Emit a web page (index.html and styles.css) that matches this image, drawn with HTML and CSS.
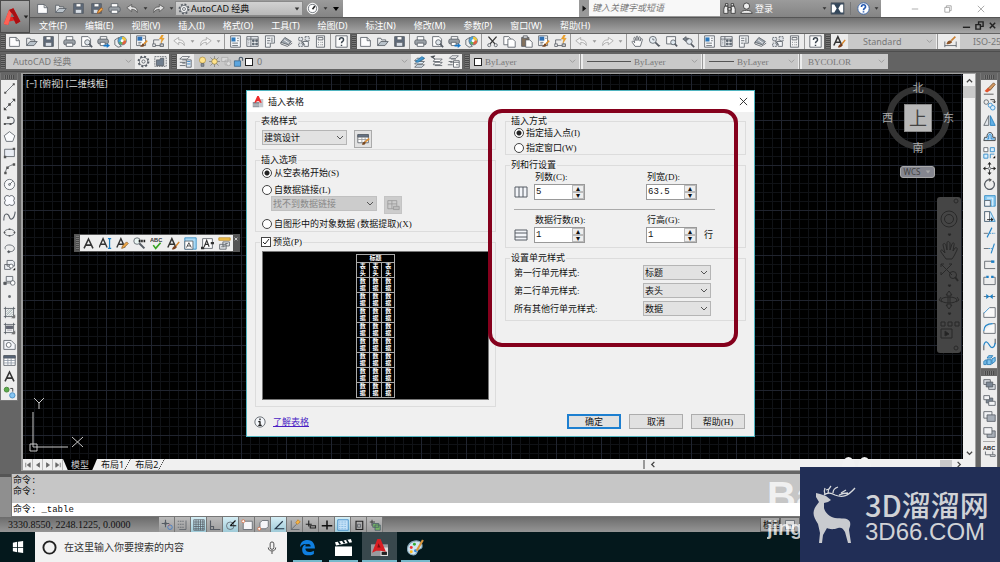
FILE: index.html
```
<!DOCTYPE html>
<html lang="zh-CN">
<head>
<meta charset="utf-8">
<title>AutoCAD 经典</title>
<link rel="stylesheet" href="styles.css">
</head>
<body>
<svg class="defs" aria-hidden="true">
<defs>
<symbol id="new" viewBox="0 0 16 16"><path d="M2 3h8l4 4v7H2z" fill="#fcfcfd"/><path d="M10 3v4h4"/></symbol>
<symbol id="open" viewBox="0 0 16 16"><path d="M2 13V4h4l1 2h5v3" fill="#e8eaec"/><path d="M2 13l4-5h9l-4 5z" fill="#b9c2ca"/></symbol>
<symbol id="save" viewBox="0 0 16 16"><path d="M2 2h12v12H2z" fill="#5f6b7c"/><path d="M5 2h6v4H5z" fill="#fff"/><path d="M4 9h8v5H4z" fill="#d8dee6"/></symbol>
<symbol id="saveas" viewBox="0 0 16 16"><path d="M2 2h12v12H2z" fill="#5f6b7c"/><path d="M5 2h6v4H5z" fill="#fff"/><path d="M4 9h6v5H4z" fill="#d8dee6"/><path d="M9 14l1-3 4-4 2 2-4 4z" fill="#f0a84a" stroke="#a05a20"/></symbol>
<symbol id="print" viewBox="0 0 16 16"><path d="M4 7V2h8v5" fill="#fff"/><rect x="1" y="6" width="14" height="6" rx="2" fill="#9aa0a6"/><path d="M4 10h8v4H4z" fill="#fff"/></symbol>
<symbol id="preview" viewBox="0 0 16 16"><path d="M2 2h8l3 3v9H2z" fill="#fff"/><circle cx="9" cy="9" r="3.2" fill="#dfe5ea"/><path d="M11 11l4 4" stroke-width="2"/></symbol>
<symbol id="publish" viewBox="0 0 16 16"><path d="M4 6V2h8v4" fill="#fff"/><rect x="1" y="5" width="13" height="6" rx="2" fill="#9aa0a6"/><path d="M4 9h6v4H4z" fill="#fff"/><path d="M8 12h4v-2l4 3-4 3v-2H8z" fill="#1777c8" stroke="none"/></symbol>
<symbol id="dwf" viewBox="0 0 16 16"><path d="M1 6l5-3v8l3 3-4 1-4-3z" fill="#eceff1"/><circle cx="10" cy="7" r="5.2" fill="#48a5de" stroke="#5f7180"/><path d="M10 7V2a5 5 0 0 1 5 5z" fill="#f0c63c" stroke="none"/><path d="M10 7h5a5 5 0 0 1-5 5z" fill="#e2603d" stroke="none"/><path d="M10 7v5a5 5 0 0 1-4-3z" fill="#60b357" stroke="none"/><circle cx="10" cy="7" r="1.8" fill="#fff" stroke="none"/></symbol>
<symbol id="match" viewBox="0 0 16 16"><path d="M2 1h11v12H2z" fill="#fff"/><path d="M3 2h6v5H3z" fill="#2c6fb5" stroke="none"/><path d="M4 9h4M4 11h3M10 4h2"/><path d="M6 14c2 0 2-3 4-4l2 2c-1 3-4 3-6 2z" fill="#7b4a24" stroke="none"/><path d="M11 11l4-4" stroke="#e0912d" stroke-width="2"/></symbol>
<symbol id="block" viewBox="0 0 16 16"><path d="M2 6h7M2 6v7h10v-3" /><rect x="1" y="11" width="3" height="3" fill="#fff"/><rect x="10" y="11" width="4" height="3" fill="#ccc"/><path d="M12 0l-3 5h3l-1 5 4-6h-3l2-4z" fill="#f5a623" stroke="#d08416" stroke-width=".5"/></symbol>
<symbol id="undo" viewBox="0 0 16 16"><path d="M1 7l6-4v3c5 0 7 2 7 7-2-3-4-4-7-4v3z"/></symbol>
<symbol id="redo" viewBox="0 0 16 16"><path d="M15 7L9 3v3c-5 0-7 2-7 7 2-3 4-4 7-4v3z"/></symbol>
<symbol id="tri" viewBox="0 0 8 8"><path d="M1 2h6L4 6z" fill="currentColor" stroke="none"/></symbol>
<symbol id="props" viewBox="0 0 16 16"><path d="M2 1h12v14H2z" fill="#f7f9fb"/><path d="M3 3h5v5H3z" fill="#2c79bd" stroke="none"/><path d="M4 10h7M4 13h7M10 4h2M10 7h2"/></symbol>
<symbol id="dcenter" viewBox="0 0 16 16"><path d="M1 2h14v12H1z" fill="#eef1f4"/><path d="M6 2v12M1 5h14M3 7h1M3 9h1M3 11h1" /><path d="M8 6h2v2H8zM12 6h2v2h-2zM8 10h2v2H8zM12 10h2v2h-2z" fill="#5d7287"/></symbol>
<symbol id="palette" viewBox="0 0 16 16"><path d="M3 1h11v9H9v5H3z" fill="#f2f4f6"/><path d="M5 4h4M5 7h4M5 10h3M11 3v6"/></symbol>
<symbol id="sheet" viewBox="0 0 16 16"><path d="M1 9l5-6 8 5-4 4z" fill="#9ea6ae"/><path d="M1 11l8 3 6-4M1 9v2"/><path d="M5 6l6 4" stroke="#fff"/></symbol>
<symbol id="markup" viewBox="0 0 16 16"><path d="M2 3h5v4H2zM10 2h5v5h-5zM2 10h5v4H2z" fill="#dfe3e8" stroke-dasharray="2 1"/><path d="M7 8h7v6H9z" fill="#f4f6f8"/><path d="M4 7l6 5"/></symbol>
<symbol id="calc" viewBox="0 0 16 16"><path d="M3 1h10v14H3z" fill="#f4f4f4"/><path d="M5 3h6v3H5zM5 9h1M8 9h1M10 9h1M5 12h1M8 12h1M10 12h1"/></symbol>
<symbol id="help" viewBox="0 0 16 16"><path d="M1 1h14v14H1z" fill="#fbfbfb"/><path d="M5.500 6c0-3.500 5-3.500 5 0 0 2-2.500 1.500-2.500 4M8 12v1.500" stroke="#3c4650" stroke-width="1.800"/></symbol>
<symbol id="cut" viewBox="0 0 16 16"><path d="M3 2l8 9M13 2L5 11" stroke="#333" stroke-width="1.600"/><circle cx="4" cy="12.500" r="1.900"/><circle cx="12" cy="12.500" r="1.900"/></symbol>
<symbol id="copy" viewBox="0 0 16 16"><path d="M1 2h6l2 2v8H1z" fill="#fff"/><path d="M6 5h6l3 3v7H6z" fill="#fff"/></symbol>
<symbol id="paste" viewBox="0 0 16 16"><path d="M2 3h9v11H2z" fill="#83715d"/><path d="M4 1h5v3H4z" fill="#ddd"/><path d="M7 6h5l3 3v6H7z" fill="#fff"/></symbol>
<symbol id="pan" viewBox="0 0 16 16"><path d="M5 14L1.500 9c-.6-1.500 1-2 1.800-.8L4.500 9.500 3.500 4c0-1.500 1.600-1.600 1.900 0L6.200 7 6.500 2.300c.1-1.300 1.800-1.300 1.900 0l.2 4.500L9.700 2.900c.4-1.200 1.900-.9 1.800.4L11 7.500l1.400-2.600c.7-1 2-.3 1.600 1L12.500 11 11.500 14z" fill="#fafafa"/></symbol>
<symbol id="zoom" viewBox="0 0 16 16"><circle cx="6" cy="6" r="4.300" fill="#e6edf2"/><path d="M9 9l5 5" stroke-width="2"/><path d="M6 4v2h2M12 13h3"/></symbol>
<symbol id="zoomwin" viewBox="0 0 16 16"><path d="M2 2h11v9H2z" fill="#f7f7f7"/><circle cx="10" cy="9" r="3" fill="#dde7ef"/><path d="M12 11l3 3" stroke-width="2"/></symbol>
<symbol id="zoomprev" viewBox="0 0 16 16"><path d="M1 5l4-3v2h3v2H5v2z" fill="#7b848e"/><circle cx="9" cy="8" r="3.500" fill="#e3eaf0"/><path d="M11 11l4 4" stroke-width="2"/></symbol>
<symbol id="gear" viewBox="0 0 16 16"><circle cx="8" cy="8" r="6" stroke-width="2.500" stroke-dasharray="2.400 2.300" /><circle cx="8" cy="8" r="5" fill="#f1f1f1"/><circle cx="8" cy="8" r="2"/></symbol>
<symbol id="wsave" viewBox="0 0 16 16"><path d="M1 2h14v12H1z" stroke-dasharray="2 1"/><path d="M3 6h4l1-2h4v9H3z" fill="#6f7d8d"/></symbol>
<symbol id="layers" viewBox="0 0 16 16"><path d="M4 2h9l-3 3H1zM4 6h5M1 9h7M4 10h4M1 13h7" fill="#fff"/><path d="M9 6h6v9H9z" fill="#dfe8f1"/><path d="M10 8h4M10 11h4" stroke="#2c79bd"/></symbol>
<symbol id="layblue" viewBox="0 0 16 16"><path d="M5 4h9l-3 3H2zM5 8h9l-3 3H2zM5 12h9l-3 3H2z" fill="#e2eef8"/><path d="M3 8l8-6 3 2-8 5z" fill="#439ad3" stroke="#2674a8"/></symbol>
<symbol id="layprev" viewBox="0 0 16 16"><path d="M6 5h9l-3 3H4zM6 9h9l-3 3H4zM6 13h9" fill="#fff"/><path d="M1 2l5-1-2 2 2 2z" fill="#222"/></symbol>
<symbol id="laystate" viewBox="0 0 16 16"><path d="M6 1h8l-3 3H3zM5 5h6M2 8h5M4 9h3M1 12h6" fill="#fff"/><path d="M8 7h7v8H8z" fill="#fff"/><path d="M8 9h7M11 12h3"/></symbol>
<symbol id="bulb" viewBox="0 0 16 16"><circle cx="8" cy="6" r="4.500" fill="#ffe38b" stroke="#a98b3d"/><path d="M6 11h4v4H6z" fill="#8d949b"/></symbol>
<symbol id="sun" viewBox="0 0 16 16"><path d="M8 0v16M0 8h16M2 2l12 12M14 2L2 14" stroke="#777"/><circle cx="8" cy="8" r="4" fill="#ffe38b" stroke="#8b7a45"/></symbol>
<symbol id="vpfreeze" viewBox="0 0 16 16"><path d="M1 2h9v6H1zM6 6h8v7H6z" stroke="#a5a5a5" fill="#d8d8d8"/><circle cx="11" cy="11" r="3" stroke="#a5a5a5" fill="#ddd"/></symbol>
<symbol id="lock" viewBox="0 0 16 16"><path d="M9 7V4c0-3 5-3 5 0v3" stroke="#456" stroke-width="1.500"/><path d="M2 7h9v8H2z" fill="#5ca6df" stroke="#2d5a80"/></symbol>
<symbol id="astyle" viewBox="0 0 16 16"><path d="M1 13L6 2l5 11M3 9h6" stroke="#333" stroke-width="1.800"/><path d="M6 15c1-2 2-4 4-4l2 1c-1 3-4 4-6 3z" fill="#7b3f1c" stroke="none"/><path d="M11 11l4-5" stroke="#d8862d" stroke-width="1.800"/></symbol>
<symbol id="dim" viewBox="0 0 16 16"><path d="M1 8v7M15 8v7M1 13h14"/><path d="M3 11c1-4 4-5 6-4l1 2c-2 2-5 3-7 2z" fill="#8b5429" stroke="none"/><path d="M9 7l5-5" stroke="#c98034" stroke-width="2"/></symbol>
<symbol id="line" viewBox="0 0 16 16"><path d="M3 13L13 3"/><path d="M1.500 12h2.500v2.500H1.500zM12 1.500h2.500V4H12z" fill="#555" stroke="none"/></symbol>
<symbol id="xline" viewBox="0 0 16 16"><path d="M2 14L14 2"/><path d="M1 15v-4l4 4zM15 1v4l-4-4zM6.500 6.500h3v3h-3z" fill="#444" stroke="none"/></symbol>
<symbol id="pline" viewBox="0 0 16 16"><path d="M2 12h8c5 0 5-8 0-8H7" stroke-width="1.300"/><path d="M1 11h2.500v2.500H1zM8 11h2.500v2.500H8zM5 3h3v3H5z" fill="#555" stroke="none"/></symbol>
<symbol id="poly" viewBox="0 0 16 16"><path d="M8 2l6.500 5L12 14H4L1.500 7z" fill="#fbfcfe"/></symbol>
<symbol id="rect" viewBox="0 0 16 16"><path d="M2 4h12v9H2z" fill="#e9edf4"/><path d="M1 12h3v3H1zM12 2h3v3h-3z" fill="#555" stroke="none"/></symbol>
<symbol id="arc" viewBox="0 0 16 16"><path d="M3 14C3 8 7 4 14 3"/><path d="M1.500 12h3v3h-3zM4 5.500h3v3H4zM12 1.500h3v3h-3z" fill="#555" stroke="none"/></symbol>
<symbol id="circle" viewBox="0 0 16 16"><circle cx="8" cy="8" r="6.300" fill="#f7f8fa"/><path d="M8 8l4-4"/><circle cx="8" cy="8" r="1.200"/></symbol>
<symbol id="cloud" viewBox="0 0 16 16"><path d="M8 3c3-3 8 1 5 5 3 4-1 8-5 5-4 3-8-1-5-5-3-4 1-8 5-5z" fill="#fafbff" stroke-width="1.200"/></symbol>
<symbol id="spline" viewBox="0 0 16 16"><path d="M1 13C1 1 7 5 8 9s6 3 7-7" stroke-width="1.300"/></symbol>
<symbol id="ellipse" viewBox="0 0 16 16"><ellipse cx="8" cy="8" rx="6.500" ry="4"/><path d="M7 3h2v2H7zM7 11h2v2H7zM1 7h2v2H1zM13 7h2v2h-2z" fill="#555" stroke="none"/></symbol>
<symbol id="earc" viewBox="0 0 16 16"><path d="M3 9C0 2 14 2 14 8c0 3-3 4-6 4"/><circle cx="7" cy="12" r="1.200" fill="#555"/></symbol>
<symbol id="insblk" viewBox="0 0 16 16"><path d="M5 3h7l2 2v5H5zM2 8h7v6H2z" fill="#eef0f4"/><circle cx="10" cy="10" r="2.500" fill="#fff"/><path d="M15 12v3h-3z" fill="#111" stroke="none"/></symbol>
<symbol id="mkblk" viewBox="0 0 16 16"><path d="M4 3h8v6H4zM1 11h9" fill="#eef0f4"/><circle cx="12" cy="11" r="2.800" fill="#fff"/><path d="M1 10h3v3H1z" fill="#555"/></symbol>
<symbol id="point" viewBox="0 0 16 16"><path d="M7 7h2v2H7z" fill="#777"/></symbol>
<symbol id="hatch" viewBox="0 0 16 16"><path d="M3 1v14M13 1v14M1 3h14M1 13h14"/><path d="M4 7l3-3M4 10l6-6M4 12l8-8M7 12l5-5M10 12l2-2" stroke="#9aa"/><path d="M10 15l5-5v5z" fill="#777" stroke="none"/></symbol>
<symbol id="grad" viewBox="0 0 16 16"><path d="M3 1v14M13 1v14M1 3h14M1 13h14"/><path d="M4 5h8v3H4z" fill="#667"/><path d="M5 10h6" stroke="#99a"/><path d="M10 15l5-5v5z" fill="#777" stroke="none"/></symbol>
<symbol id="region" viewBox="0 0 16 16"><path d="M1 3h9l5 5v6H1z" fill="#f4f6fa"/><circle cx="7" cy="8.500" r="3" fill="#fff"/></symbol>
<symbol id="table" viewBox="0 0 16 16"><path d="M1 2h14v12H1z" fill="#fff"/><path d="M1 2h14v3H1z" fill="#59677a"/><path d="M1 8h14M1 11h14M6 5v9M10 5v9" stroke="#8b95a2"/></symbol>
<symbol id="mtext" viewBox="0 0 16 16"><path d="M2.500 14L8 2.500 13.500 14M4.500 10h7" stroke="#333" stroke-width="1.900"/></symbol>
<symbol id="addsel" viewBox="0 0 16 16"><circle cx="4.500" cy="4.500" r="3" fill="#5cab4a" stroke="#3c7d2f"/><circle cx="11.500" cy="11.500" r="3.300" fill="#85c4f2" stroke="#3b86bd"/><path d="M9 3h3v4" stroke="#222"/></symbol>
<symbol id="erase" viewBox="0 0 16 16"><path d="M6 8l7-7 2 2-6 7z" fill="#d59a62" stroke="#75512f"/><path d="M2 11l4-4 3 3-4 3z" fill="#e0552f" stroke="none"/><path d="M1 15h12" stroke="#444"/></symbol>
<symbol id="copyobj" viewBox="0 0 16 16"><circle cx="4" cy="5" r="2.800"/><circle cx="9" cy="9" r="2.600" stroke="#2f8bd0"/><circle cx="12" cy="12" r="2.800" stroke="#2f8bd0" fill="#d9edfb"/><path d="M9 2h5v4M12 4l2 2 2-2" stroke="#222"/></symbol>
<symbol id="mirror" viewBox="0 0 16 16"><path d="M7 2v12H1z" fill="#e3e6ea"/><path d="M9 2v12h6z" fill="#62b1e6" stroke="#1f7dbd"/></symbol>
<symbol id="offset" viewBox="0 0 16 16"><path d="M1 13h14V9h-3C13 1 4 1 5 9H2z" fill="#b9defa" stroke="#333"/><path d="M5 11h2V7c0-2 3-2 3 0v4h4" stroke="#1d7fc4"/></symbol>
<symbol id="array" viewBox="0 0 16 16"><path d="M1 2h5v5H1z" fill="#fff"/><path d="M9 2h5v5H9zM1 10h5v5H1z" stroke="#2585c7" fill="#d9edfb"/><path d="M9 15v-5h5" stroke="#2585c7"/><path d="M15 12v3h-3z" fill="#111" stroke="none"/></symbol>
<symbol id="move" viewBox="0 0 16 16"><path d="M8 1v5M8 10v5M1 8h5M10 8h5" stroke="#222"/><path d="M8 0l2.500 3h-5zM8 16l2.500-3h-5zM0 8l3-2.500v5zM16 8l-3-2.500v5z" fill="#222" stroke="none"/><circle cx="8" cy="8" r="1.500"/></symbol>
<symbol id="rotate" viewBox="0 0 16 16"><path d="M8 2a6 6 0 1 0 4 1.500" stroke-width="1.500"/><path d="M7 0l4 2-3 3z" fill="#555" stroke="none"/></symbol>
<symbol id="scale" viewBox="0 0 16 16"><path d="M2 2h13v13H2z" fill="#8ccbf2" stroke="#2a86c2"/><path d="M5 5h7v10" stroke="#fff"/><path d="M2 8h7v7H2z" fill="#eef4fa"/></symbol>
<symbol id="stretch" viewBox="0 0 16 16"><path d="M2 2h7l6 12H2z" fill="#cbe8fb" stroke="#2a86c2"/><path d="M2 2h6v12H2z" fill="#f6f6f6"/><path d="M5 11h5v-2l3 3-3 2v-2H5z" fill="#222" stroke="none"/></symbol>
<symbol id="trim" viewBox="0 0 16 16"><path d="M1 9h5" /><path d="M8 9h7" stroke="#2585c7" stroke-dasharray="2 1"/><path d="M5 14L11 2" stroke="#2585c7" stroke-width="1.400"/></symbol>
<symbol id="extend" viewBox="0 0 16 16"><path d="M1 8h6"/><path d="M7 8h4" stroke="#2585c7" stroke-dasharray="2 1"/><path d="M10 14l4-12" stroke="#2585c7" stroke-width="1.400"/></symbol>
<symbol id="breakpt" viewBox="0 0 16 16"><path d="M12 4H2v9h13" /><path d="M10 3h4v3h-4z" fill="#1d7fc4" stroke="none"/></symbol>
<symbol id="break" viewBox="0 0 16 16"><path d="M4 4H1v9h14V4h-3"/><path d="M4 2h3v3H4zM10 2h3v3h-3z" fill="#1d7fc4" stroke="none"/></symbol>
<symbol id="join" viewBox="0 0 16 16"><path d="M1 8h14"/><path d="M4 5l4 3-4 3zM12 5L8 8l4 3z" fill="#1d7fc4" stroke="none"/></symbol>
<symbol id="chamfer" viewBox="0 0 16 16"><path d="M1 8v6h14V2H8" fill="#f8f8f8"/><path d="M1 9l7-7" stroke="#2585c7"/></symbol>
<symbol id="fillet" viewBox="0 0 16 16"><path d="M1 11v3h14V2h-3" fill="#f8f8f8"/><path d="M1 11c0-6 4-9 11-9" stroke="#2585c7" stroke-width="1.400"/></symbol>
<symbol id="blend" viewBox="0 0 16 16"><path d="M1 15V9M15 1v6" stroke-width="1.300"/><path d="M1 9c2-7 5-4 7 0s6 4 7-3" stroke="#2585c7" stroke-width="1.500"/></symbol>
<symbol id="explode" viewBox="0 0 16 16"><path d="M5 7h5v6H5zM1 9l3-2v6H1zM5 5l2-3h5l-2 3zM11 6l4-2v5l-4 3z" fill="#7fc3ee" stroke="#2076b3"/></symbol>
<symbol id="front" viewBox="0 0 16 16"><path d="M1 2h8v6H1zM7 8h8v6H7z" fill="#d7dbe0"/><path d="M4 5h8v6H4z" fill="#7c8794"/></symbol>
<symbol id="back" viewBox="0 0 16 16"><path d="M4 5h8v6H4z" fill="#7c8794"/><path d="M1 2h7v5H1zM7 9h8v5H7z" fill="#f2f3f5"/></symbol>
<symbol id="above" viewBox="0 0 16 16"><path d="M1 2h10v8H1z" fill="#f2f3f5"/><path d="M5 6h10v8H5z" fill="#a7aeb7"/></symbol>
<symbol id="under" viewBox="0 0 16 16"><path d="M5 6h10v8H5z" fill="#a7aeb7"/><path d="M1 2h10v8H1z" fill="#f2f3f5"/></symbol>
<symbol id="abc" viewBox="0 0 16 16"><text x="0" y="6" font-size="7" font-weight="bold" font-family="Liberation Sans, sans-serif" fill="#222" stroke="none">ABC</text><path d="M3 8v4h9V8M12 12h3v2H9v-2"/></symbol>
<symbol id="textedit" viewBox="0 0 16 16"><path d="M1 13L6 2l5 11M3 9h6" stroke="#333" stroke-width="1.700"/><path d="M7 14l1-3 5-5 2 2-5 5z" fill="#f5ab46" stroke="#8c5c24"/></symbol>
<symbol id="dtext" viewBox="0 0 16 16"><path d="M0 13L5 2l5 11M2 9h6" stroke="#333" stroke-width="1.700"/><path d="M11 2h4M11 14h4M13 2v12" stroke="#1d7fc4" stroke-width="1.500"/></symbol>
<symbol id="find" viewBox="0 0 16 16"><circle cx="5" cy="5" r="4" fill="#e9f4f1"/><path d="M8 8l6 6" stroke-width="2.500"/><path d="M7 5h8" stroke="#222" stroke-width="3" stroke-dasharray="2 1"/></symbol>
<symbol id="spell" viewBox="0 0 16 16"><text x="0" y="6" font-size="7" font-weight="bold" font-family="Liberation Sans, sans-serif" fill="#333" stroke="none">ABC</text><path d="M4 10l3 4 6-7" stroke="#37a321" stroke-width="2"/></symbol>
<symbol id="scaletext" viewBox="0 0 16 16"><path d="M1 1h14v14H1z" fill="#a9d9f5" stroke="#2a86c2"/><path d="M1 5h10v10H1z" fill="#fff"/><path d="M3 13l3-6 3 6M4 11h4" stroke="#333"/></symbol>
<symbol id="justify" viewBox="0 0 16 16"><path d="M2 2h12v12H2z" fill="#fff"/><path d="M4 12l3-8 3 8M5 9h4" stroke="#333" stroke-width="1.400"/><path d="M0 12h4v3H0zM12 6h4v3h-4z" fill="#333" stroke="none"/></symbol>
<symbol id="spacecv" viewBox="0 0 16 16"><path d="M1 1h14v3H1z" fill="#f6c64f" stroke="#b88827"/><path d="M6 6h8v5H6zM2 9h8v6H2z" fill="#e4e7ea"/><path d="M4 12h4M9 8h3"/></symbol>
<symbol id="logoA" viewBox="0 0 24 24"><path d="M2 20L8 4l5-2 8 15-5 3-2-4-6 1-1 4z" fill="#e32622"/><path d="M8 4l5-2 8 15-5 3z" fill="#a90f13"/><path d="M9 12l2-5 3 5z" fill="#777" stroke="none"/><path d="M8 4L2 20l5 1 4-13z" fill="#ff6155" stroke="none"/></symbol>
<symbol id="appico" viewBox="0 0 16 16"><path d="M1 8h9v7H1z" fill="#8b9098" stroke="none"/><path d="M10 4h5v11h-5z" fill="#c3c8ce" stroke="none"/><path d="M1 11h9M1 13h9" stroke="#fff" stroke-width=".5"/><path d="M3 9L7 0h2l4 9h-2.500L9.500 7h-3L5 9z" fill="#ef2b2b" stroke="none"/></symbol>
<symbol id="tablebrush" viewBox="0 0 16 16"><path d="M1 2h13v10H1z" fill="#fff"/><path d="M1 2h13v3H1z" fill="#667587"/><path d="M1 8h13M6 5v7M10 5v7" stroke="#999"/><path d="M6 14c2-4 3-4 5-3-1 4-3 4-5 3z" fill="#78471f" stroke="none"/><path d="M10 11l5-4" stroke="#dd8f32" stroke-width="2"/></symbol>
</defs>
</svg>

<div class="app">
<header class="top">
  <button class="appbtn" aria-label="应用程序菜单"><svg class="applogo"><use href="#logoA"/></svg><svg class="t"><use href="#tri"/></svg></button>
  <div class="topmain">
    <div class="titlebar">
      <div class="quick">
        <button class="ic" aria-label="新建"><svg><use href="#new"/></svg></button>
        <button class="ic" aria-label="打开"><svg><use href="#open"/></svg></button>
        <button class="ic" aria-label="保存"><svg><use href="#save"/></svg></button>
        <button class="ic" aria-label="另存为"><svg><use href="#saveas"/></svg></button>
        <button class="ic" aria-label="打印"><svg><use href="#print"/></svg></button>
        <button class="ic pale" aria-label="放弃"><svg><use href="#undo"/></svg></button><button class="dd" aria-label="放弃列表"><svg><use href="#tri"/></svg></button>
        <button class="ic pale" aria-label="重做"><svg><use href="#redo"/></svg></button><button class="dd" aria-label="重做列表"><svg><use href="#tri"/></svg></button>
        <label class="wsbox"><svg class="i"><use href="#gear"/></svg><select aria-label="工作空间"><option>AutoCAD 经典</option></select></label>
        <button class="ic" aria-label="速度"><svg viewBox="0 0 16 16"><circle cx="8" cy="8" r="6.500" fill="#fff" stroke="#fff"/><circle cx="8" cy="8" r="5"/><path d="M8 9l3-4" stroke="#222" stroke-width="2"/></svg></button><button class="dd" aria-label="更多"><svg><use href="#tri"/></svg></button>
        <button class="dd cust" aria-label="自定义"><svg><use href="#tri"/></svg></button>
      </div>
      <div class="caption"></div>
      <button class="expand" aria-label="展开"><svg viewBox="0 0 8 8"><path d="M2 0v8l5-4z" fill="#111" stroke="none"/></svg></button>
      <input class="search" aria-label="搜索" placeholder="键入关键字或短语">
      <div class="info">
        <button class="ic" aria-label="查找"><svg viewBox="0 0 16 16"><path d="M2 5h4v9H1V9zM10 5h4l1 4v5h-5zM6 7h4v3H6zM3 2h3v3H3zM10 2h3v3h-3z" fill="#eee" stroke="#333"/></svg></button>
        <button class="ic" aria-label="用户"><svg viewBox="0 0 16 16"><circle cx="8" cy="5" r="3.800" fill="#eee" stroke="#333"/><path d="M1 14c0-5 14-5 14 0z" fill="#eee" stroke="#333"/></svg></button>
        <button class="login">登录</button>
        <button class="dd" aria-label="登录菜单"><svg><use href="#tri"/></svg></button>
        <button class="ic" aria-label="Exchange"><svg viewBox="0 0 16 16"><path d="M0 1h16v14H0z" fill="#33475b"/><path d="M1 3h3l3 5-3 5H1zM15 3h-3L9 8l3 5h3z" fill="#fff" stroke="none"/></svg></button>
        <span class="vline"></span>
        <button class="ic" aria-label="帮助"><svg viewBox="0 0 16 16"><circle cx="8" cy="8" r="7" fill="#fff" stroke="#2a5caa"/><path d="M5.500 6c0-3.500 5-3.500 5 0 0 2-2.500 1.500-2.500 4M8 11.500v1.500" stroke="#2458b0" stroke-width="2"/></svg></button>
        <button class="dd" aria-label="帮助菜单"><svg><use href="#tri"/></svg></button>
      </div>
      <div class="winctl">
        <button aria-label="最小化"><svg viewBox="0 0 10 10"><path d="M1 5h8"/></svg></button>
        <button aria-label="还原"><svg viewBox="0 0 10 10"><path d="M1 3h6v6H1zM3 3V1h6v6H7"/></svg></button>
        <button aria-label="关闭"><svg viewBox="0 0 10 10"><path d="M1 1l8 8M9 1L1 9"/></svg></button>
      </div>
    </div>
    <nav class="menubar">
      <button>文件(F)</button><button>编辑(E)</button><button>视图(V)</button><button>插入(I)</button><button>格式(O)</button><button>工具(T)</button><button>绘图(D)</button><button>标注(N)</button><button>修改(M)</button><button>参数(P)</button><button>窗口(W)</button><button>帮助(H)</button>
      <span class="docctl">
        <button aria-label="最小化文档"><svg viewBox="0 0 10 10"><path d="M1 7h8"/></svg></button>
        <button aria-label="还原文档"><svg viewBox="0 0 10 10"><path d="M1 4h5v5H1zM4 4V1h5v5H6"/></svg></button>
        <button aria-label="关闭文档"><svg viewBox="0 0 10 10"><path d="M2 2l6 6M8 2L2 8"/></svg></button>
      </span>
    </nav>
  </div>
</header>

<div class="tbrow">
  <div class="tb"><i class="grip"></i>
    <button class="ic" aria-label="新建"><svg><use href="#new"/></svg></button><button class="ic" aria-label="打开"><svg><use href="#open"/></svg></button><button class="ic" aria-label="保存"><svg><use href="#save"/></svg></button><i class="sep"></i>
    <button class="ic" aria-label="打印"><svg><use href="#print"/></svg></button><button class="ic" aria-label="打印预览"><svg><use href="#preview"/></svg></button><button class="ic" aria-label="发布"><svg><use href="#publish"/></svg></button><button class="ic" aria-label="三维 DWF"><svg><use href="#dwf"/></svg></button><i class="sep"></i>
    <button class="ic" aria-label="特性匹配"><svg><use href="#match"/></svg></button><button class="ic" aria-label="块编辑器"><svg><use href="#block"/></svg></button><i class="sep"></i>
    <button class="ic off" aria-label="放弃"><svg><use href="#undo"/></svg></button><button class="dd off" aria-label="放弃列表"><svg><use href="#tri"/></svg></button><button class="ic off" aria-label="重做"><svg><use href="#redo"/></svg></button><button class="dd off" aria-label="重做列表"><svg><use href="#tri"/></svg></button><i class="sep"></i>
    <button class="ic" aria-label="特性"><svg><use href="#props"/></svg></button><button class="ic" aria-label="设计中心"><svg><use href="#dcenter"/></svg></button><button class="ic" aria-label="工具选项板"><svg><use href="#palette"/></svg></button><button class="ic" aria-label="图纸集"><svg><use href="#sheet"/></svg></button><button class="ic" aria-label="标记集"><svg><use href="#markup"/></svg></button><button class="ic" aria-label="计算器"><svg><use href="#calc"/></svg></button><i class="sep"></i>
    <button class="ic" aria-label="帮助"><svg><use href="#help"/></svg></button>
  </div>
  <div class="tb"><i class="grip"></i>
    <button class="ic" aria-label="新建"><svg><use href="#new"/></svg></button><button class="ic" aria-label="打开"><svg><use href="#open"/></svg></button><button class="ic" aria-label="保存"><svg><use href="#save"/></svg></button><i class="sep"></i>
    <button class="ic" aria-label="打印"><svg><use href="#print"/></svg></button><button class="ic" aria-label="打印预览"><svg><use href="#preview"/></svg></button><button class="ic" aria-label="发布"><svg><use href="#publish"/></svg></button><button class="ic" aria-label="三维 DWF"><svg><use href="#dwf"/></svg></button><i class="sep"></i>
    <button class="ic" aria-label="剪切"><svg><use href="#cut"/></svg></button><button class="ic" aria-label="复制"><svg><use href="#copy"/></svg></button><button class="ic" aria-label="粘贴"><svg><use href="#paste"/></svg></button><button class="ic" aria-label="特性匹配"><svg><use href="#match"/></svg></button><button class="ic" aria-label="块编辑器"><svg><use href="#block"/></svg></button><i class="sep"></i>
    <button class="ic off" aria-label="放弃"><svg><use href="#undo"/></svg></button><button class="dd off" aria-label="放弃列表"><svg><use href="#tri"/></svg></button><button class="ic off" aria-label="重做"><svg><use href="#redo"/></svg></button><button class="dd off" aria-label="重做列表"><svg><use href="#tri"/></svg></button><i class="sep"></i>
    <button class="ic" aria-label="平移"><svg><use href="#pan"/></svg></button><button class="ic" aria-label="缩放"><svg><use href="#zoom"/></svg></button><button class="ic" aria-label="窗口缩放"><svg><use href="#zoomwin"/></svg></button><button class="ic" aria-label="缩放上一个"><svg><use href="#zoomprev"/></svg></button><i class="sep"></i>
    <button class="ic" aria-label="特性"><svg><use href="#props"/></svg></button><button class="ic" aria-label="设计中心"><svg><use href="#dcenter"/></svg></button><button class="ic" aria-label="工具选项板"><svg><use href="#palette"/></svg></button><button class="ic" aria-label="图纸集"><svg><use href="#sheet"/></svg></button><button class="ic" aria-label="标记集"><svg><use href="#markup"/></svg></button><button class="ic" aria-label="计算器"><svg><use href="#calc"/></svg></button><i class="sep"></i>
    <button class="ic" aria-label="帮助"><svg><use href="#help"/></svg></button>
  </div>
  <div class="tb rest"><i class="grip"></i>
    <button class="ic" aria-label="文字样式"><svg><use href="#astyle"/></svg></button><select class="gsel std" aria-label="文字样式"><option>Standard</option></select><i class="sep"></i>
    <button class="ic wide" aria-label="标注样式"><svg><use href="#dim"/></svg></button><select class="gsel iso" aria-label="标注样式"><option>ISO-25</option></select>
  </div>
</div>
<div class="tbrow second">
  <div class="tb"><i class="grip"></i><select class="gsel ws" aria-label="工作空间"><option>AutoCAD 经典</option></select>
    <button class="ic" aria-label="工作空间设置"><svg><use href="#gear"/></svg></button><button class="ic" aria-label="我的工作空间"><svg><use href="#wsave"/></svg></button>
  </div>
  <div class="tb"><i class="grip"></i>
    <button class="ic" aria-label="图层特性"><svg><use href="#layers"/></svg></button>
    <label class="layer"><svg><use href="#bulb"/></svg><svg><use href="#sun"/></svg><svg><use href="#vpfreeze"/></svg><svg><use href="#lock"/></svg><i class="swatch"></i><select class="gsel" aria-label="图层"><option>0</option></select></label>
    <button class="ic" aria-label="置为当前"><svg><use href="#layblue"/></svg></button><button class="ic" aria-label="上一个图层"><svg><use href="#layprev"/></svg></button><button class="ic" aria-label="图层状态"><svg><use href="#laystate"/></svg></button>
  </div>
  <div class="tb bylayer"><i class="grip"></i>
    <label class="prop color"><i class="swatch"></i><select class="gsel" aria-label="颜色"><option>ByLayer</option></select></label><i class="sep"></i>
    <label class="prop ltype"><i class="rule long"></i><select class="gsel" aria-label="线型"><option>ByLayer</option></select></label><i class="sep"></i>
    <label class="prop lw"><i class="rule"></i><select class="gsel" aria-label="线宽"><option>ByLayer</option></select></label><i class="sep"></i>
    <label class="prop pstyle"><select class="gsel" aria-label="打印样式"><option>BYCOLOR</option></select></label>
  </div>
</div>

<main class="work">
  <aside class="rail left"><div class="strip"><i class="hgrip"></i>
    <button aria-label="直线"><svg><use href="#line"/></svg></button><button aria-label="构造线"><svg><use href="#xline"/></svg></button><button aria-label="多段线"><svg><use href="#pline"/></svg></button><button aria-label="多边形"><svg><use href="#poly"/></svg></button><button aria-label="矩形"><svg><use href="#rect"/></svg></button><button aria-label="圆弧"><svg><use href="#arc"/></svg></button><button aria-label="圆"><svg><use href="#circle"/></svg></button><button aria-label="修订云线"><svg><use href="#cloud"/></svg></button><button aria-label="样条曲线"><svg><use href="#spline"/></svg></button><button aria-label="椭圆"><svg><use href="#ellipse"/></svg></button><button aria-label="椭圆弧"><svg><use href="#earc"/></svg></button><button aria-label="插入块"><svg><use href="#insblk"/></svg></button><button aria-label="创建块"><svg><use href="#mkblk"/></svg></button><button aria-label="点"><svg><use href="#point"/></svg></button><button aria-label="图案填充"><svg><use href="#hatch"/></svg></button><button aria-label="渐变色"><svg><use href="#grad"/></svg></button><button aria-label="面域"><svg><use href="#region"/></svg></button><button aria-label="表格"><svg><use href="#table"/></svg></button><button aria-label="多行文字"><svg><use href="#mtext"/></svg></button><button aria-label="添加选定对象"><svg><use href="#addsel"/></svg></button>
  </div></aside>

  <section class="doc">
    <div class="viewrow">
      <div class="canvas">
        <div class="vplabel">[−] [俯视] [二维线框]</div>
        <div class="floatbar"><i class="grip"></i><div class="set">
          <button aria-label="多行文字"><svg><use href="#mtext"/></svg></button><button aria-label="单行文字"><svg><use href="#dtext"/></svg></button><button aria-label="编辑文字"><svg><use href="#textedit"/></svg></button><button aria-label="查找"><svg><use href="#find"/></svg></button><button aria-label="拼写检查"><svg><use href="#spell"/></svg></button><button aria-label="文字样式"><svg><use href="#astyle"/></svg></button><button aria-label="缩放文字"><svg><use href="#scaletext"/></svg></button><button aria-label="对正文字"><svg><use href="#justify"/></svg></button><button aria-label="转换空间"><svg><use href="#spacecv"/></svg></button>
        </div><button class="x" aria-label="关闭工具栏"><svg viewBox="0 0 6 6"><path d="M1 1l4 4M5 1L1 5"/></svg></button></div>
        <svg class="ucs" viewBox="0 0 60 60"><path d="M8 18v35h35M5 50h7v7H5zM9 4l5 5 5-5M14 9v6M47 43l11 10M58 43L47 53"/></svg>
        <div class="cube"><svg viewBox="0 0 72 72"><circle cx="36" cy="36" r="31" fill="none" stroke="#333" stroke-width="7"/></svg>
          <span class="n">北</span><span class="s">南</span><span class="w">西</span><span class="e">东</span><span class="face">上</span></div>
        <button class="wcs">WCS <svg><use href="#tri"/></svg></button>
        <div class="navbar"><svg viewBox="0 0 24 156">
          <circle cx="19" cy="4" r="2"/><circle cx="12" cy="22" r="8"/><circle cx="12" cy="22" r="4.500"/><path d="M11 37h3l-1.500 2zM11 88h3l-1.500 2zM11 116h3l-1.500 2z" fill="#222"/>
          <path d="M9 62l-5-7c-1-2 1-3 2-1l2 2-2-8c0-2 2-2 3 0l1 5 0-7c0-2 2-2 3 0v7l2-6c1-2 3-1 2 1l-1 6 2-3c1-1 3 0 2 2l-3 6-2 3z"/>
          <path d="M4 67l11 11M15 67L4 78M4 67h3M4 67v3M15 67h-3M4 78v-3"/><circle cx="16" cy="78" r="3.500"/><path d="M18 80l3 4" stroke-width="2"/>
          <ellipse cx="12" cy="103" rx="8" ry="3"/><path d="M12 94l3 4h-2v10h2l-3 4-3-4h2V98H9zM4 100l-2 3 3 2M20 100l2 3-3 2"/>
          <path d="M4 125h4v4H4zM11 125h4v4h-4zM18 125h4v4h-4zM4 132h11v9H4z"/><path d="M8 134v5l4-2z" fill="#222"/><circle cx="19" cy="151" r="2"/></svg></div>
      </div>
      <div class="vscroll"><button aria-label="向上"><svg viewBox="0 0 8 8"><path d="M1 6l3-3 3 3"/></svg></button><i class="thumb"></i><button class="end" aria-label="向下"><svg viewBox="0 0 8 8"><path d="M1 2l3 3 3-3"/></svg></button></div>
    </div>
    <div class="tabs">
      <button class="nv" aria-label="第一个"><svg viewBox="0 0 8 8"><path d="M1 1v6M7 1v6L3 4z"/></svg></button><button class="nv" aria-label="上一个"><svg viewBox="0 0 8 8"><path d="M6 1v6L2 4z"/></svg></button><button class="nv" aria-label="下一个"><svg viewBox="0 0 8 8"><path d="M2 1v6l4-3z"/></svg></button><button class="nv" aria-label="最后一个"><svg viewBox="0 0 8 8"><path d="M7 1v6M1 1v6l4-3z"/></svg></button>
      <button class="tab active">模型</button><button class="tab">布局1</button><button class="tab">布局2</button>
      <div class="hscroll"><i class="split"></i><button aria-label="向左"><svg viewBox="0 0 8 8"><path d="M5 1L2 4l3 3"/></svg></button><i class="hthumb"></i><button aria-label="向右"><svg viewBox="0 0 8 8"><path d="M3 1l3 3-3 3"/></svg></button></div>
    </div>
  </section>

  <aside class="rail right"><div class="strip"><i class="hgrip"></i>
    <button aria-label="删除"><svg><use href="#erase"/></svg></button><button aria-label="复制"><svg><use href="#copyobj"/></svg></button><button aria-label="镜像"><svg><use href="#mirror"/></svg></button><button aria-label="偏移"><svg><use href="#offset"/></svg></button><button aria-label="阵列"><svg><use href="#array"/></svg></button><button aria-label="移动"><svg><use href="#move"/></svg></button><button aria-label="旋转"><svg><use href="#rotate"/></svg></button><button aria-label="缩放"><svg><use href="#scale"/></svg></button><button aria-label="拉伸"><svg><use href="#stretch"/></svg></button><button aria-label="修剪"><svg><use href="#trim"/></svg></button><button aria-label="延伸"><svg><use href="#extend"/></svg></button><button aria-label="打断于点"><svg><use href="#breakpt"/></svg></button><button aria-label="打断"><svg><use href="#break"/></svg></button><button aria-label="合并"><svg><use href="#join"/></svg></button><button aria-label="倒角"><svg><use href="#chamfer"/></svg></button><button aria-label="圆角"><svg><use href="#fillet"/></svg></button><button aria-label="光顺曲线"><svg><use href="#blend"/></svg></button><button aria-label="分解"><svg><use href="#explode"/></svg></button>
    </div><div class="strip grow"><i class="hgrip"></i>
    <button aria-label="前置"><svg><use href="#front"/></svg></button><button aria-label="后置"><svg><use href="#back"/></svg></button><button aria-label="置于对象之上"><svg><use href="#above"/></svg></button><button aria-label="置于对象之下"><svg><use href="#under"/></svg></button><i class="hsep"></i><button aria-label="文字前置"><svg><use href="#abc"/></svg></button>
  </div></aside>
</main>

<section class="command">
  <i class="cgrip"></i>
  <div class="ctext">
    <div class="history"><div>命令:</div><div>命令:</div></div>
    <label class="prompt"><span>命令:</span><input value="_table"></label>
  </div>
</section>

<footer class="status">
  <output class="coords">3330.8550, 2248.1225, 0.0000</output>
  <div class="modes">
    <button aria-label="推断约束"><svg viewBox="0 0 16 16"><path d="M6 1v10M1 6h10" stroke-width="1.500"/><circle cx="6" cy="6" r="1.500"/><circle cx="12" cy="11" r="3" stroke="#37c"/><path d="M10 9l2-2" stroke="#d33"/></svg></button>
    <button aria-label="捕捉"><svg viewBox="0 0 16 16"><path d="M1 3h8M1 7h8M1 11h8" stroke-dasharray="2 1"/><path d="M12 2v12M3 14h9"/></svg></button>
    <button class="on" aria-label="栅格"><svg viewBox="0 0 16 16"><path d="M1 1h14v14H1zM1 4h14M1 7h14M1 10h14M1 13h14M4 1v14M7 1v14M10 1v14M13 1v14"/></svg></button>
    <button aria-label="正交"><svg viewBox="0 0 16 16"><path d="M2 2v12h13M2 10h4v4" stroke-width="1.500"/></svg></button>
    <button class="on" aria-label="极轴"><svg viewBox="0 0 16 16"><circle cx="7" cy="9" r="5"/><path d="M7 9l7-7M7 9h8" stroke="#111" stroke-width="1.500"/></svg></button>
    <button aria-label="对象捕捉"><svg viewBox="0 0 16 16"><path d="M3 3h12v11H3z" fill="#f5f5f8"/><circle cx="3" cy="3" r="2" stroke="#d8683a" fill="#fff"/></svg></button>
    <button aria-label="三维对象捕捉"><svg viewBox="0 0 16 16"><path d="M4 5l3-3h8v8l-3 3H4z" fill="#f5f5f8"/><circle cx="3" cy="13" r="2" stroke="#d8683a" fill="#fff"/></svg></button>
    <button class="on" aria-label="对象追踪"><svg viewBox="0 0 16 16"><path d="M13 3L3 13h12" stroke="#234" stroke-width="1.500"/></svg></button>
    <button aria-label="动态 UCS"><svg viewBox="0 0 16 16"><path d="M3 2v12h11M3 14l7-7"/><path d="M9 5l3-4 3 3-4 3z" fill="#f5b649" stroke="#bd7e22"/></svg></button>
    <button aria-label="动态输入"><svg viewBox="0 0 16 16"><path d="M5 2v8M1 7h8M7 9h7v3H7z" stroke="#222" stroke-width="1.500"/></svg></button>
    <button aria-label="线宽"><svg viewBox="0 0 16 16"><path d="M1 9h14M8 2v12" stroke="#111" stroke-width="2"/></svg></button>
    <button class="on" aria-label="透明度"><svg viewBox="0 0 16 16"><path d="M1 1h14v14H1z" fill="#c4e1f7" stroke="#2c7fc2"/><path d="M3 4h10M3 7h10M3 10h10M3 13h10" stroke="#5da2d5" stroke-dasharray="1 1"/></svg></button>
    <button aria-label="快捷特性"><svg viewBox="0 0 16 16"><path d="M4 3h9v11H4z" stroke="#222" stroke-width="1.500"/><path d="M6 7h4v4H6z"/></svg></button>
    <button aria-label="选择循环"><svg viewBox="0 0 16 16"><path d="M4 1v8M1 4h7" stroke="#222"/><path d="M5 6h8v5H5zM8 8h7v7H8z" fill="#77b564" stroke="#456"/></svg></button>
  </div>
  <div class="smodel"><button>模型</button><button aria-label="布局"><svg viewBox="0 0 16 16"><path d="M2 2h12v12H2z" fill="#ddd"/><path d="M5 8h5v5"/></svg></button></div>
</footer>

<footer class="taskbar">
  <button class="start" aria-label="开始"><svg viewBox="0 0 14 14"><path d="M1 2l5-1v6H1zM7 1l6-1v7H7zM1 8h5v5l-5-1zM7 8h6v6l-6-1z" fill="#fff" stroke="none"/></svg></button>
  <label class="cortana"><svg viewBox="0 0 16 16"><circle cx="8" cy="8" r="6.500" stroke="#222" stroke-width="2"/></svg><input placeholder="在这里输入你要搜索的内容" aria-label="搜索 Windows"><svg class="mic" viewBox="0 0 10 14"><rect x="3" y="1" width="4" height="8" rx="2"/><path d="M1 7c0 5 8 5 8 0M5 11v3"/></svg></label>
  <div class="apps">
    <button aria-label="Edge"><svg viewBox="0 0 16 16"><path d="M1 8C1 3 4 1 8 1c5 0 7 4 7 8H6c0 4 5 4 8 2v3C8 17 3 15 3 10c0-3 2-5 5-5-3-1-6 0-7 3zm5-1h5c0-3-5-3-5 0z" fill="#0f7fe0" fill-rule="evenodd" stroke="none"/></svg></button>
    <button aria-label="电影和电视"><svg viewBox="0 0 16 16"><path d="M0 7h16v9H0z" fill="#fff" stroke="none"/><path d="M0 3l15-3 1 3L1 6z" fill="#fff" stroke="none"/><path d="M3 2l2 3M7 1l2 3M11 1l2 3" stroke="#04181c" stroke-width="1.500"/></svg></button>
    <button class="cur" aria-label="AutoCAD"><svg viewBox="0 0 16 16"><path d="M0 5h16v11H0z" fill="#9a9a9f" stroke="none"/><path d="M9 8h7v8H9z" fill="#ddd" stroke="none"/><path d="M10 12h5v3h-5z" fill="#222" stroke="none"/><path d="M1 13L6 0l3 0 5 12-5-1-4 0z" fill="#d81e23" stroke="none"/><path d="M6 8l1-4 2 4z" fill="#7b0d12" stroke="none"/></svg></button>
    <button aria-label="画图"><svg viewBox="0 0 16 16"><path d="M7 2c5-1 8 2 7 6-1 2-3 1-4 3s-1 4-4 4C-2 14-1 4 7 2z" fill="#d3e6f2" stroke="#8ab"/><circle cx="4" cy="8" r="1.400" fill="#e33" stroke="none"/><circle cx="7" cy="5" r="1.400" fill="#3a3" stroke="none"/><circle cx="4" cy="12" r="1.400" fill="#fb2" stroke="none"/><circle cx="8" cy="11" r="1.400" fill="#38d" stroke="none"/><path d="M9 11l6-10" stroke="#d9953c" stroke-width="2"/></svg></button>
  </div>
</footer>

<form class="dialog" role="dialog" aria-labelledby="dt">
  <div class="dtitle"><svg><use href="#appico"/></svg><span id="dt">插入表格</span><button type="button" aria-label="关闭"><svg viewBox="0 0 10 10"><path d="M1 1l8 8M9 1L1 9"/></svg></button></div>
  <div class="dbody">
    <div class="col">
      <fieldset class="g-style"><legend>表格样式</legend><div class="row">
        <select class="wsel" aria-label="表格样式"><option>建筑设计</option></select><button type="button" class="sq" aria-label="表格样式对话框"><svg><use href="#tablebrush"/></svg></button></div></fieldset>
      <fieldset class="g-opt"><legend>插入选项</legend>
        <label class="radio"><input type="radio" name="src" checked>从空表格开始(S)</label>
        <label class="radio gap"><input type="radio" name="src">自数据链接(L)</label>
        <div class="row indent"><select class="wsel long" disabled aria-label="数据链接"><option>找不到数据链接</option></select><button type="button" class="sq dis" disabled aria-label="数据链接管理器"><svg viewBox="0 0 16 16"><path d="M1 2h11v10H1zM1 6h11M6 2v10"/><path d="M8 9h7v4H8z" fill="#bbb"/></svg></button></div>
        <label class="radio last"><input type="radio" name="src">自图形中的对象数据 (数据提取)(X)</label>
      </fieldset>
      <fieldset class="g-prev"><legend><label class="radio"><input type="checkbox" checked>预览(P)</label></legend>
        <div class="preview"><table>
          <thead><tr><th colspan="3">标题</th></tr></thead>
          <tbody>
          <tr><td>表<br>头</td><td>表<br>头</td><td>表<br>头</td></tr>
          <tr><td>数<br>据</td><td>数<br>据</td><td>数<br>据</td></tr>
          <tr><td>数<br>据</td><td>数<br>据</td><td>数<br>据</td></tr>
          <tr><td>数<br>据</td><td>数<br>据</td><td>数<br>据</td></tr>
          <tr><td>数<br>据</td><td>数<br>据</td><td>数<br>据</td></tr>
          <tr><td>数<br>据</td><td>数<br>据</td><td>数<br>据</td></tr>
          <tr><td>数<br>据</td><td>数<br>据</td><td>数<br>据</td></tr>
          <tr><td>数<br>据</td><td>数<br>据</td><td>数<br>据</td></tr>
          <tr><td>数<br>据</td><td>数<br>据</td><td>数<br>据</td></tr>
          </tbody></table></div>
      </fieldset>
    </div>
    <div class="col">
      <fieldset class="g-ins"><legend>插入方式</legend>
        <label class="radio"><input type="radio" name="ins" checked>指定插入点(I)</label>
        <label class="radio second"><input type="radio" name="ins">指定窗口(W)</label></fieldset>
      <fieldset class="g-rc"><legend>列和行设置</legend>
        <div class="rc"><svg viewBox="0 0 14 14"><path d="M1 2h12v10H1z" fill="#f3f5f9"/><path d="M5 2v10M9 2v10"/></svg>
          <label for="cols">列数(C):</label><span class="spin"><input id="cols" value="5"><span class="ud"><button type="button" aria-label="增加">▴</button><button type="button" aria-label="减少">▾</button></span></span>
          <label class="b" for="colw">列宽(D):</label><span class="spin b"><input id="colw" value="63.5"><span class="ud"><button type="button" aria-label="增加">▴</button><button type="button" aria-label="减少">▾</button></span></span></div>
        <hr>
        <div class="rc"><svg viewBox="0 0 14 14"><path d="M1 2h12v10H1z" fill="#f3f5f9"/><path d="M1 5h12M1 9h12"/></svg>
          <label for="rows">数据行数(R):</label><span class="spin"><input id="rows" value="1"><span class="ud"><button type="button" aria-label="增加">▴</button><button type="button" aria-label="减少">▾</button></span></span>
          <label class="b" for="rowh">行高(G):</label><span class="spin b"><input id="rowh" value="1"><span class="ud"><button type="button" aria-label="增加">▴</button><button type="button" aria-label="减少">▾</button></span></span><span class="unit">行</span></div>
      </fieldset>
      <fieldset class="g-cell"><legend>设置单元样式</legend><div class="cells">
        <label for="c1">第一行单元样式:</label><select id="c1" class="wsel"><option>标题</option></select>
        <label for="c2">第二行单元样式:</label><select id="c2" class="wsel"><option>表头</option></select>
        <label for="c3">所有其他行单元样式:</label><select id="c3" class="wsel"><option>数据</option></select>
      </div></fieldset>
    </div>
  </div>
  <div class="dfoot"><svg viewBox="0 0 14 14"><circle cx="7" cy="7" r="6" fill="#f4f7fb"/><path d="M7 3v2M7 6v5M5 11h4M5 6.500h2" stroke="#222" stroke-width="1.600"/></svg><a href="#">了解表格</a>
    <button type="button" class="ok">确定</button><button type="button">取消</button><button type="button">帮助(H)</button></div>
  <div class="mark"></div>
</form>

<div class="baidu"><i class="paw"></i><i class="paw p2"></i><span class="b1">Bai</span><span class="b2">jingyan</span></div>
<div class="brand">
  <svg viewBox="0 0 43 58"><path d="M3 7l4 1 6 2 5 4-3 2-4 1v5c1 5 6 9 11 10 6 1 13-1 15 4 1 4-1 6-1 8l2 13h-3l-3-11c-2-4-4-5-7-4-5 2-9 1-11 0l-4 7-1 8H6l1-10-2-9C0 30-1 26 3 20l3-4-3-5z" fill="#c9cbcf" stroke="none"/><path d="M11 9c4-3 7-2 11 0 8 3 13 1 20-7M12 9c-1-3-1-5 0-7M15 7c0-3 1-5 3-7M20 7c0-3 2-5 5-6M26 9c2-1 5-2 9-2M28 7l5-3M13 4l3-1" stroke="#d7d9dc" stroke-width="1.300"/></svg>
  <div class="words"><span class="cn">3D溜溜网</span><span class="en">3D66.COM</span></div>
</div>
</div>
</body>
</html>
```
FILE: styles.css
```
* { box-sizing: border-box; }
html, body { margin: 0; height: 100%; }
body { font: 9px/12px "Noto Sans", "Noto Sans CJK SC", sans-serif; color: #111; overflow: hidden; }
button, select, input { font: inherit; color: inherit; margin: 0; padding: 0; border: 0; background: none; border-radius: 0; outline: 0; }
select { appearance: none; }
svg { fill: none; stroke: #565c64; stroke-width: 1; flex: none; display: block; overflow: visible; }
i { font-style: normal; display: block; flex: none; }
.defs { position: absolute; width: 0; height: 0; }
.app { position: relative; min-height: 100vh; display: flex; flex-direction: column; background: #656565; }

/* title and menu */
.top { display: flex; background: #8b8b8b; }
.appbtn { width: 30px; display: flex; align-items: center; justify-content: center; background: linear-gradient(#a9a9a9, #777); border: 1px solid #4b4b4b; }
.applogo { width: 21px; height: 24px; stroke: none; }
.appbtn .t { width: 6px; height: 6px; color: #222; }
.topmain { flex: 1; min-width: 0; }
.titlebar { display: flex; height: 18px; background: linear-gradient(#9b9b9b, #848484); border-bottom: 1px solid #555; }
.quick { display: flex; align-items: center; width: 313px; padding-left: 3px; }
.quick .ic { width: 18px; }
.quick .dd { width: 8px; }
.ic { width: 17px; display: flex; align-items: center; justify-content: center; }
.ic svg { width: 13px; height: 13px; }
.ic.pale svg { fill: #e4e4e4; stroke: #555; }
.dd { width: 9px; color: #333; display: flex; align-items: center; justify-content: center; }
.dd svg { width: 5px; height: 5px; }
.quick .cust { width: 14px; color: #000; }
.dd.cust svg { width: 8px; height: 8px; }
.off svg { stroke: #a4a4a4; fill: #f4f4f4; color: #999; }
.wsbox { flex: 1; height: 15px; display: flex; align-items: center; gap: 1px; padding-left: 2px; background: linear-gradient(#d2d2d2, #b9b9b9); border: 1px solid #8a8a8a; }
.wsbox .i { width: 12px; height: 12px; }
.wsbox select { flex: 1; line-height: 12px; background: url("data:image/svg+xml,%3Csvg xmlns='http://www.w3.org/2000/svg' viewBox='0 0 8 8'%3E%3Cpath d='M1 2h6L4 6z' fill='%23333'/%3E%3C/svg%3E") right 2px center / 6px no-repeat; }
.caption { flex: 1; background: #fff; }
.expand { width: 10px; display: grid; place-items: center; background: #999; }
.expand svg { width: 6px; height: 7px; }
.search { width: 131px; padding: 0 3px; background: #f8f8f8; font-style: italic; border-bottom: 1px solid #999; }
.search::placeholder { color: #777; }
.info { width: 161px; display: flex; align-items: center; padding-left: 1px; }
.info .ic { width: 17px; }
.login { color: #fff; margin-right: auto; }
.vline { width: 1px; height: 13px; background: #777; margin: 0 4px; }
.winctl { width: 119px; display: flex; background: #fff; padding: 0 3px 0 17px; }
.winctl button { flex: 1; display: grid; place-items: center; }
.winctl svg { width: 8px; height: 8px; stroke: #999; }
.menubar { height: 15px; display: flex; align-items: center; gap: 18px; padding-left: 9px; background: linear-gradient(#727272, #a6a6a6); color: #fff; white-space: nowrap; }
.docctl { margin-left: auto; display: flex; gap: 2px; padding-right: 1px; }
.docctl button { width: 11px; }
.docctl svg { width: 9px; height: 9px; stroke: #222; stroke-width: 1.6; }

/* horizontal toolbars */
.tbrow { display: flex; gap: 1px; height: 19px; padding: 1px 0 2px; border-bottom: 1px solid #4e4e4e; overflow: hidden; background: #636363; }
.tbrow.second { height: 20px; gap: 2px; padding: 2px 0; }
.tb { display: flex; background: #ececec; flex: none; }
.tb.rest { flex: 1; min-width: 0; }
.grip { width: 6px; background: repeating-linear-gradient(#777 0 1px, #484848 1px 2px); border: 1px solid #5a5a5a; }
.sep { width: 4px; background: linear-gradient(90deg, #ececec 1px, #999 1px 2px, #ececec 2px); }
.gsel, .layer, .prop { background-color: #c9c9c9; color: #777; }
.gsel { background-image: url("data:image/svg+xml,%3Csvg xmlns='http://www.w3.org/2000/svg' viewBox='0 0 8 8' fill='none' stroke='%23999'%3E%3Cpath d='M1 2l3 3 3-3'/%3E%3C/svg%3E"); background-repeat: no-repeat; background-position: right 3px center; background-size: 7px; }
.std { width: 88px; padding-left: 15px; font-size: 9px; }
.ic.wide { width: 20px; }
.iso { flex: 1; padding-left: 13px; font-size: 9px; min-width: 0; background-image: none; }
.ws { width: 129px; padding-left: 7px; }
.layer { width: 217px; display: flex; align-items: center; padding-left: 3px; }
.layer svg { width: 11px; height: 11px; margin-right: 1px; }
.swatch { width: 8px; height: 8px; border: 1px solid #222; background: #fff; }
.layer select { flex: 1; text-indent: 4px; }
.bylayer { font-family: "Liberation Serif", serif; }
.prop { display: flex; align-items: center; padding-left: 4px; gap: 3px; }
.prop select { flex: 1; min-width: 0; }
.color { width: 109px; }
.ltype { width: 118px; }
.lw { width: 93px; }
.pstyle { width: 86px; padding-left: 6px; }
.rule { width: 25px; height: 1px; background: #555; }
.rule.long { width: 44px; }

/* work area */
.work { flex: 1; min-height: 0; display: flex; padding-top: 1px; }
.rail { flex: none; overflow: hidden; display: flex; flex-direction: column; }
.left { width: 21px; }
.right { width: 24px; padding-left: 4px; padding-right: 2px; }
.strip { width: 18px; background: #ededed; border: 1px solid #777; border-width: 0 1px 1px; }
.strip.grow { flex: 1; }
.hgrip { height: 7px; background: repeating-linear-gradient(90deg, #777 0 1px, #4a4a4a 1px 2px); border: 1px solid #666; border-width: 2px 3px 1px; }
.strip button { display: grid; place-items: center; width: 100%; height: 16px; }
.strip svg { width: 13px; height: 13px; }
.hsep { height: 1px; background: #aaa; margin: 1px 2px; }
.doc { flex: 1; min-width: 0; display: flex; flex-direction: column; border: 1px solid #a0a0a0; border-width: 1px 1px 1px 2px; margin-bottom: 3px; }
.viewrow { flex: 1; min-height: 0; display: flex; }
.canvas { position: relative; flex: 1; background-color: #000; overflow: hidden;
  background-image: linear-gradient(90deg, #20242f 1px, transparent 1px), linear-gradient(#20242f 1px, transparent 1px), linear-gradient(90deg, #101216 1px, transparent 1px), linear-gradient(#101216 1px, transparent 1px);
  background-size: 45px 45px, 45px 45px, 9px 9px, 9px 9px; background-position: 38px 46px, 38px 46px, 2px 1px, 2px 1px; }
.vplabel { padding: 4px 3px; color: #ddd; }
.floatbar { position: absolute; left: 51px; top: 160px; display: flex; background: #555; padding: 1px; }
.floatbar .grip { width: 5px; }
.set { display: flex; background: #eee; }
.set button { width: 17px; height: 16px; display: grid; place-items: center; }
.set svg { width: 13px; height: 13px; }
.floatbar .x { width: 6px; height: 8px; display: grid; place-items: center; }
.floatbar .x svg { width: 4px; height: 4px; stroke: #fff; }
.ucs { position: absolute; left: 2px; bottom: 5px; width: 60px; height: 60px; stroke: #c8c8c8; }
.cube { position: absolute; right: 9px; top: 8px; width: 72px; height: 72px; display: grid; place-items: center; color: #aaa; font-size: 11px; }
.cube > * { grid-area: 1 / 1; }
.cube svg { width: 66px; height: 66px; }
.cube .n { align-self: start; }
.cube .s { align-self: end; }
.cube .w { justify-self: start; }
.cube .e { justify-self: end; }
.face { width: 28px; height: 28px; display: grid; place-items: center; background: #b8b8b8; color: #444; font-size: 18px; border: 1px solid #888; }
.wcs { position: absolute; right: 28px; top: 92px; width: 35px; height: 12px; display: flex; align-items: center; justify-content: space-around; background: #85868f; border: 1px solid #aaa; border-radius: 3px; color: #444; font-size: 8px; line-height: 10px; }
.wcs svg { width: 6px; height: 6px; color: #aaa; }
.navbar { position: absolute; right: 2px; top: 123px; width: 24px; background: #454545; border-radius: 3px; }
.navbar svg { stroke: #292929; width: 24px; height: 156px; }
.vscroll { width: 12px; background: #f1f1f1; display: flex; flex-direction: column; }
.vscroll button, .hscroll button { height: 12px; width: 12px; display: grid; place-items: center; }
.vscroll svg, .hscroll svg { width: 7px; height: 7px; stroke: #444; stroke-width: 1.5; }
.thumb { height: 12px; background: #c9c9c9; }
.vscroll .end { margin-top: auto; }
.tabs { height: 11px; display: flex; background: #f0f0f0; line-height: 11px; }
.nv { width: 10px; border-right: 1px solid #bbb; display: grid; place-items: center; }
.nv svg { width: 6px; height: 6px; stroke: #666; fill: #666; }
.tab { padding: 0 7px 0 4px; line-height: 11px; background: linear-gradient(117deg, transparent 46%, #444 47% 53%, transparent 54%) right / 7px 100% no-repeat; }
.tab.active { background: #000; color: #ccc; padding: 0 8px; clip-path: polygon(0 0, 100% 0, 86% 100%, 14% 100%); }
.hscroll { flex: 1; display: flex; align-items: center; padding-left: 478px; padding-right: 11px; min-width: 0; }
.split { width: 2px; height: 9px; background: #999; margin-right: 2px; }
.hthumb { width: 12px; height: 10px; background: #c9c9c9; margin-left: auto; }

/* command line */
.command { display: flex; height: 43px; background: #c6c6c6; }
.cgrip { width: 12px; background: linear-gradient(#555 3px, #8f8f8f 3px); border-right: 1px solid #777; }
.ctext { flex: 1; display: flex; flex-direction: column; font-family: "Liberation Mono", "Noto Sans CJK SC", monospace; border-bottom: 1px solid #777; }
.history { flex: 1; padding: 2px 0 0 1px; line-height: 11px; }
.prompt { display: flex; align-items: center; gap: 5px; height: 13px; background: #fff; padding: 2px 0 0 1px; line-height: 11px; }
.prompt input { flex: 1; line-height: 11px; height: 11px; }

/* status bar */
.status { display: flex; align-items: center; height: 15px; background: linear-gradient(#6c6c6c, #959595); }
.coords { width: 159px; padding-left: 8px; font: 10px/12px "Liberation Serif", serif; }
.modes, .smodel { display: flex; height: 15px; }
.modes button { width: 16px; display: grid; place-items: center; background: linear-gradient(#bbb, #9c9c9c); border-right: 1px solid #777; }
.modes .on { background: linear-gradient(#d6eef5, #9fcbd8); }
.modes svg, .smodel svg { width: 12px; height: 12px; }
.smodel { margin-left: auto; padding-right: 200px; }
.smodel button { padding: 0 2px; width: 20px; border: 1px solid #666; background: #a5a5a5; display: grid; place-items: center; white-space: nowrap; }

/* taskbar */
.taskbar { height: 30px; display: flex; background: #04181c; }
.start { width: 35px; display: grid; place-items: center; }
.start svg { width: 12px; height: 12px; }
.cortana { width: 252px; display: flex; align-items: center; gap: 7px; padding: 0 10px 0 7px; background: #f2f2f2; font-size: 10px; }
.cortana svg { width: 15px; height: 15px; }
.cortana input { flex: 1; min-width: 0; }
.cortana input::placeholder { color: #333; }
.cortana .mic { width: 10px; height: 13px; stroke: #444; }
.apps { display: flex; gap: 1px; padding-left: 3px; }
.apps button { width: 35px; display: grid; place-items: center; border: solid transparent; border-width: 0 3px; background: linear-gradient(#76b9cb, #76b9cb) bottom / 100% 2px no-repeat; }
.apps .cur { border: 0; background-color: #39484d; }
.apps svg { width: 17px; height: 17px; }

/* dialog */
.dialog { position: absolute; left: 246px; top: 90px; width: 509px; background: #f0f0f0; border: 1px solid #4fb3bf; font-family: "Liberation Serif", "Noto Sans CJK SC", serif; }
.dtitle { display: flex; align-items: center; height: 21px; background: #fff; padding: 0 6px 0 5px; gap: 4px; }
.dtitle svg { width: 12px; height: 12px; }
.dtitle button { margin-left: auto; }
.dtitle button svg { width: 9px; height: 9px; stroke: #222; }
.dbody { display: grid; grid-template-columns: 1fr 1fr; gap: 9px; padding: 3px 8px 0; }
.col { display: flex; flex-direction: column; gap: 4px; }
fieldset { margin: 0; min-width: 0; border: 1px solid #dcdcdc; padding: 0 6px 1px; }
legend { padding: 0 1px; margin-left: -2px; height: 12px; }
.col + .col legend { margin-left: -4px; }
.row { display: flex; gap: 7px; }
.wsel { width: 85px; height: 15px; padding-left: 1px; border: 1px solid #b5b5b5; background: #e2e2e2 url("data:image/svg+xml,%3Csvg xmlns='http://www.w3.org/2000/svg' viewBox='0 0 8 8' fill='none' stroke='%23555'%3E%3Cpath d='M1 2l3 3 3-3'/%3E%3C/svg%3E") right 2px center / 8px no-repeat; line-height: 12px; }
.wsel:disabled { background-color: #ccc; color: #888; border-color: #c0c0c0; opacity: 1; }
.wsel.long { width: 106px; }
.sq { width: 18px; height: 18px; display: grid; place-items: center; background: #e2e2e2; border: 1px solid #aaa; }
.sq svg { width: 13px; height: 13px; }
.sq.dis { background: #ccc; border-color: #c4c4c4; }
.sq.dis svg { stroke: #999; }
.g-style .row { padding-top: 3px; }
.radio { display: flex; align-items: center; gap: 2px; height: 12px; white-space: nowrap; }
.radio input { appearance: none; width: 10px; height: 10px; border: 1px solid #444; border-radius: 50%; background: #fff; }
.radio input:checked { background: radial-gradient(#222 0 2px, #fff 3px); }
.radio input[type=checkbox] { border-radius: 0; background: #fff url("data:image/svg+xml,%3Csvg xmlns='http://www.w3.org/2000/svg' viewBox='0 0 8 8' fill='none' stroke='%23222'%3E%3Cpath d='M1 4l2 2 4-5'/%3E%3C/svg%3E") center / 8px no-repeat; }
.g-opt { padding-top: 1px; }
.radio.gap { margin-top: 5px; }
.indent { padding-left: 9px; }
.radio.last { margin-top: 4px; }
.g-prev { padding: 3px 6px 6px; }
.preview { height: 149px; background: #000; border: 1px solid #777; display: grid; place-items: center; }
.preview table { width: 39px; border-collapse: collapse; color: #fff; font: bold 6px/7px "Liberation Sans", "Noto Sans CJK SC", sans-serif; }
.preview th, .preview td { border: 1px solid #aaa; padding: 0; text-align: center; }
.g-ins { padding: 0 6px 0 8px; }
.radio.second { margin-top: 3px; }
.g-rc { padding: 0 8px 4px; }
.rc { display: grid; grid-template-columns: 20px 112px 51px 1fr; grid-template-rows: 13px 16px; }
.rc > svg { grid-area: 2 / 1; width: 14px; height: 14px; align-self: center; }
.rc > label { grid-area: 1 / 2; padding-left: 1px; }
.rc > label.b { grid-area: 1 / 3; white-space: nowrap; }
.spin { grid-area: 2 / 2; width: 51px; height: 16px; display: flex; border: 1px solid #999; background: #fff; font-family: "Liberation Mono", monospace; }
.spin.b { grid-area: 2 / 3; }
.spin input { flex: 1; min-width: 0; padding-left: 1px; }
.ud { width: 12px; display: flex; flex-direction: column; background: #eee; }
.ud button { flex: 1; min-height: 0; border: 1px solid #bbb; font-family: "DejaVu Sans", sans-serif; font-size: 8px; line-height: 5px; overflow: hidden; }
.unit { grid-area: 2 / 4; padding-left: 7px; line-height: 16px; }
hr { margin: 9px 22px 4px 0; border: 0; border-top: 1px solid #aaa; }
.g-cell { padding: 1px 8px 4px; }
.cells { display: grid; grid-template-columns: 129px 68px; row-gap: 3px; align-items: center; }
.cells .wsel { width: 68px; }
.dfoot { display: flex; align-items: center; gap: 8px; padding: 7px 9px 7px 7px; }
.dfoot svg { width: 12px; height: 12px; }
.dfoot a { color: #4a1fc4; margin: 0 auto 0 -1px; }
.dfoot button { width: 54px; height: 15px; background: #e1e1e1; border: 1px solid #adadad; line-height: 12px; }
.dfoot .ok { border: 2px solid #1d7fd0; }
.mark { position: absolute; left: 241px; top: 18px; width: 250px; height: 238px; border: 4px solid #85001c; border-radius: 14px; pointer-events: none; }

/* overlays */
.baidu { position: absolute; right: 120px; bottom: 19px; width: 113px; height: 87px; overflow: hidden; color: rgba(255, 255, 255, .75); font-family: "Liberation Sans", sans-serif; font-weight: bold; }
.paw { position: absolute; left: 75px; top: 1px; width: 13px; height: 20px; border-radius: 50%; background: #f2f2f2; }
.paw.p2 { left: 91px; }
.b1 { position: absolute; left: 0; top: 18px; font-size: 40px; line-height: 44px; }
.b2 { position: absolute; left: 0; top: 61px; font-size: 20px; line-height: 22px; }
.brand { position: absolute; right: 0; bottom: 0; width: 200px; height: 95px; display: flex; align-items: center; gap: 9px; padding: 0 10px 0 13px; background: #212e56; color: #d0d2d6; }
.brand svg { width: 43px; height: 58px; }
.words { display: flex; flex-direction: column; white-space: nowrap; }
.cn { font: 500 29px/34px "Noto Sans CJK SC", sans-serif; }
.en { font: 24px/22px "Liberation Sans", sans-serif; }
```
